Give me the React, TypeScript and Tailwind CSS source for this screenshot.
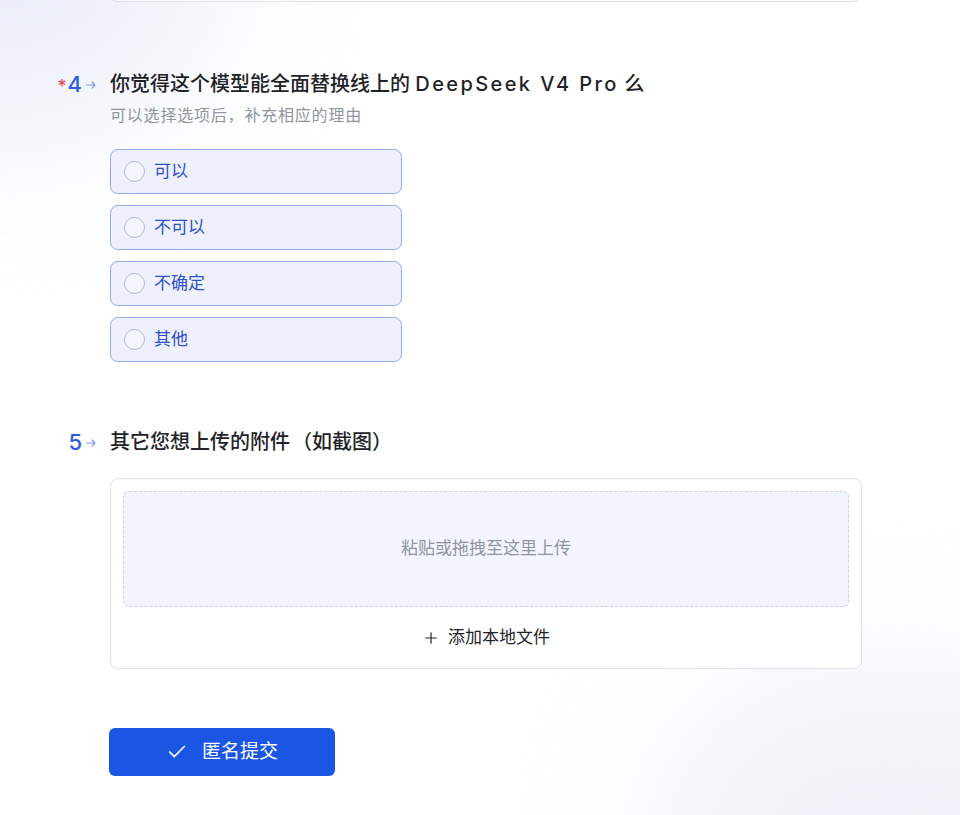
import { Check, Plus } from 'lucide-react';

const options = ['可以', '不可以', '不确定', '其他'];

function Arrow() {
  return (
    <svg width="12" height="12" viewBox="0 0 12 12" fill="none" className="ml-[3px] mt-[1px]">
      <path d="M1.5 6h8.5M7 3l3 3-3 3" stroke="#7f9cf0" strokeWidth="1.2" strokeLinecap="round" strokeLinejoin="round" />
    </svg>
  );
}

function QuestionHeader({ num, required, children }: { num: number; required?: boolean; children: React.ReactNode }) {
  return (
    <div className="-ml-[63px] flex items-center h-[28px]">
      <div className="w-[50px] flex items-center justify-end">
        {required && <span className="text-[#e5484d] text-[18px] leading-none mr-[1px] mt-[5px]">*</span>}
        <span className="text-[#2b5be0] text-[22px] leading-none font-medium">{num}</span>
        <Arrow />
      </div>
      <h3 className="ml-[13px] text-[20px] font-medium text-[#1f2329] leading-[28px] whitespace-nowrap">{children}</h3>
    </div>
  );
}

export default function App() {
  return (
    <div className="relative min-h-screen overflow-hidden bg-white font-['Inter','Noto_Sans_CJK_SC',sans-serif]">
      {/* soft background glows */}
      <div className="absolute -left-[240px] -top-[240px] w-[460px] h-[380px] rounded-full bg-[#e8ecf8] blur-[70px] opacity-80" />
      <div className="absolute -right-[180px] -bottom-[220px] w-[480px] h-[360px] rounded-full bg-[#eceef7] blur-[70px] opacity-80" />

      <div className="relative ml-[110px] w-[752px] pb-[39px]">
        {/* previous question box, cut off at the top */}
        <div className="-mt-[40px] h-[42px] w-[751px] rounded-lg border border-[#dde0e6] bg-white/70" />

        {/* Question 4 */}
        <div className="mt-[68px]">
          <QuestionHeader num={4} required>
            你觉得这个模型能全面替换线上的 <span className="tracking-[2.4px]">DeepSeek V4 Pro</span> 么
          </QuestionHeader>
          <p className="mt-[6px] text-[16px] leading-[22px] tracking-[0.8px] text-[#8f959e]">
            可以选择选项后，补充相应的理由
          </p>
          <div className="mt-[23px] flex flex-col gap-[11px]">
            {options.map((opt) => (
              <label
                key={opt}
                className="flex items-center h-[45px] w-[292px] rounded-lg border border-[#95aaf0] bg-[#eef1fd] pl-[13px] cursor-pointer"
              >
                <span className="w-[21px] h-[21px] rounded-full border border-[#a9b5da] bg-white/40" />
                <span className="ml-[9px] text-[17px] text-[#2d4fcb]">{opt}</span>
              </label>
            ))}
          </div>
        </div>

        {/* Question 5 */}
        <div className="mt-[66px]">
          <QuestionHeader num={5}>
            其它您想上传的附件<span className="inline-block w-[22px] text-right">（</span>如截图<span className="inline-block w-[22px] text-left">）</span>
          </QuestionHeader>
          <div className="mt-[22px] rounded-lg border border-[#dfe1e6] bg-white px-[12px] pt-[12px]">
            <div className="h-[116px] rounded-md border border-dashed border-[#cdd3e2] bg-[#f2f5fd] flex items-center justify-center">
              <span className="text-[17px] text-[#8f959e]">粘贴或拖拽至这里上传</span>
            </div>
            <button className="h-[61px] w-full flex items-center justify-center gap-[8px] text-[17px] text-[#1f2329]">
              <Plus className="w-[18px] h-[18px]" strokeWidth={1.6} />
              添加本地文件
            </button>
          </div>
        </div>

        {/* submit */}
        <button className="mt-[59px] -ml-[1px] h-[48px] w-[226px] rounded-md bg-[#1a55e3] text-white flex items-center justify-center gap-[14px] text-[19px]">
          <Check className="w-[22px] h-[22px]" strokeWidth={1.8} />
          匿名提交
        </button>
      </div>
    </div>
  );
}
